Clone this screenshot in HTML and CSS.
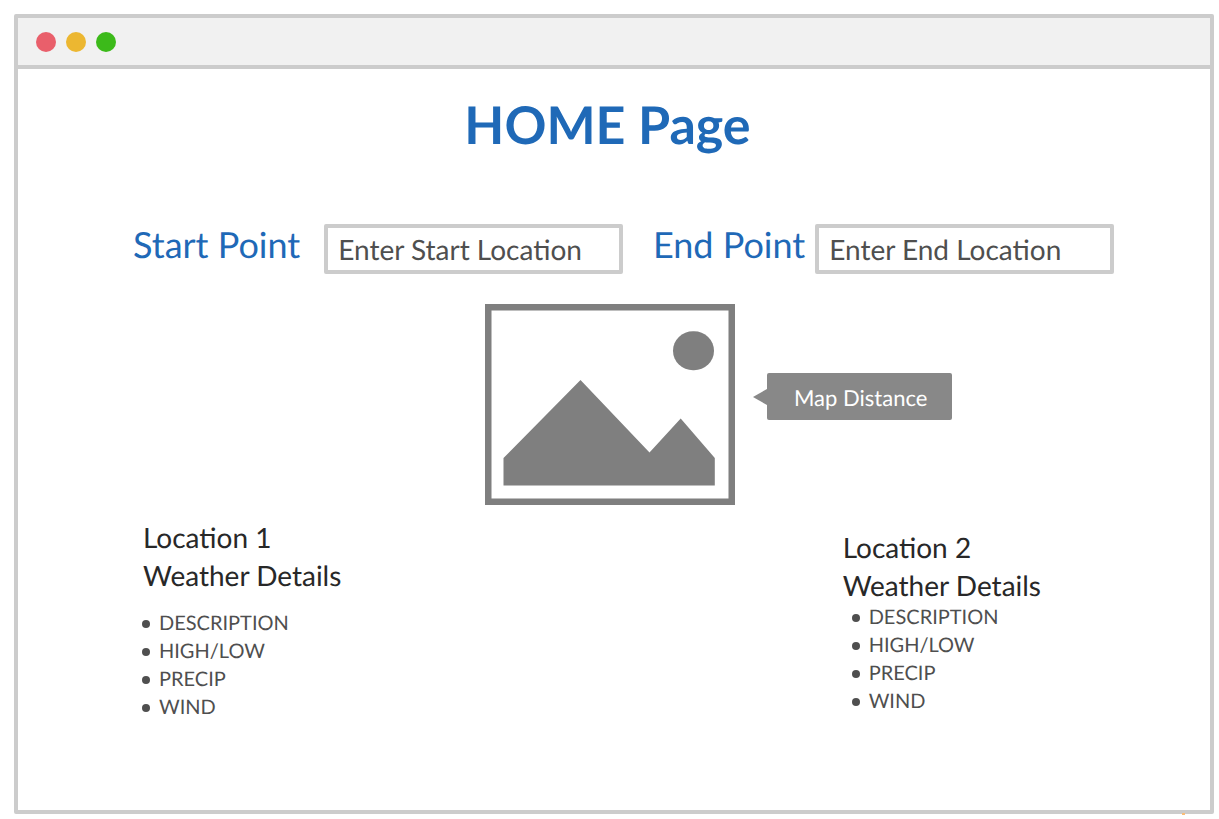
FILE: index.html
```html
<!DOCTYPE html>
<html lang="en">
<head>
<meta charset="utf-8">
<meta name="viewport" content="width=device-width, initial-scale=1">
<title>HOME Page</title>
<link rel="stylesheet" href="styles.css">
</head>
<body>
<div class="window">
  <header class="titlebar">
    <span class="dot dot-red"></span>
    <span class="dot dot-yellow"></span>
    <span class="dot dot-green"></span>
  </header>
  <main>
    <h1 class="title">HOME Page</h1>
    <form class="route">
      <label class="route-label" for="start">Start Point</label>
      <input class="route-input" id="start" type="text" placeholder="Enter Start Location">
      <label class="route-label route-label-end" for="end">End Point</label>
      <input class="route-input" id="end" type="text" placeholder="Enter End Location">
    </form>
    <section class="map">
      <svg class="map-image" width="250" height="201" viewBox="0 0 250 201" role="img" aria-label="Map">
        <path fill="#7f7f7f" fill-rule="evenodd" d="M0 0H250V201H0ZM6.500 6.500V194.500H243.500V6.500Z"/>
        <path fill="#7f7f7f" d="M18.500 154L95.500 76L164.500 148.500L195.700 114.500L229.800 154V181.500H18.500Z"/>
        <rect x="188" y="27.300" width="41" height="39" rx="20" ry="19.500" fill="#7f7f7f"/>
      </svg>
      <div class="callout">Map Distance</div>
    </section>
    <div class="weather">
      <section>
        <h2 class="weather-title">Location 1<br>Weather Details</h2>
        <ul class="weather-list">
          <li>DESCRIPTION</li>
          <li>HIGH/LOW</li>
          <li>PRECIP</li>
          <li>WIND</li>
        </ul>
      </section>
      <section class="weather-second">
        <h2 class="weather-title">Location 2<br>Weather Details</h2>
        <ul class="weather-list">
          <li>DESCRIPTION</li>
          <li>HIGH/LOW</li>
          <li>PRECIP</li>
          <li>WIND</li>
        </ul>
      </section>
    </div>
  </main>
  <span class="speck"></span>
</div>
</body>
</html>
```

FILE: styles.css
```css
* {
  box-sizing: border-box;
}

body {
  margin: 0;
  padding: 14px 5px 5px 14px;
  background: #fff;
  font-family: Lato, "Liberation Sans", sans-serif;
  text-rendering: geometricPrecision;
}

.window {
  position: relative;
  min-height: calc(100vh - 19px);
  padding-bottom: 20px;
  border: 4px solid #ccc;
  border-radius: 2px;
}

.titlebar {
  display: flex;
  align-items: center;
  gap: 10px;
  height: 51px;
  padding: 0 18px;
  background: #f1f1f1;
  border-bottom: 4px solid #ccc;
}

.dot {
  width: 20px;
  height: 20px;
  border-radius: 50%;
}

.dot-red { background: #e95f6b; }
.dot-yellow { background: #ecb731; }
.dot-green { background: #3cba1a; }

.title {
  margin: 0;
  padding: 24px 13px 0 0;
  color: #1f69b7;
  font-size: 52px;
  line-height: 64px;
  font-weight: 700;
  text-align: center;
}

.route {
  display: flex;
  margin-top: 67px;
  padding: 0 96px 0 115px;
}

.route-label {
  flex: none;
  margin-right: 24px;
  color: #1f69b7;
  font-size: 36px;
  line-height: 40px;
}

.route-label-end {
  margin: 0 10px 0 30px;
}

.route-input {
  flex: 1;
  min-width: 0;
  height: 50px;
  padding: 0 10px;
  border: 4px solid #ccc;
  border-radius: 2px;
  background: #fff;
  color: #4f4f4f;
  font: 28px Lato, "Liberation Sans", sans-serif;
  text-rendering: inherit;
}

.route-input::placeholder {
  color: #4f4f4f;
  opacity: 1;
}

.map {
  display: grid;
  grid-template-columns: 1fr 250px 1fr;
  align-items: center;
  margin-top: 30px;
  padding-right: 8px;
}

.map-image {
  grid-column: 2;
}

.callout {
  position: relative;
  justify-self: start;
  margin: 0 0 16px 32px;
  padding: 3px 25px 0 27px;
  border-radius: 2px;
  background: #888;
  color: #fff;
  font-size: 22px;
  line-height: 44px;
}

.callout::before {
  content: "";
  position: absolute;
  top: 16px;
  right: 100%;
  border: solid transparent;
  border-width: 8px 14px 8px 0;
  border-right-color: #888;
}

.weather {
  display: flex;
  justify-content: space-between;
  margin-top: 13px;
  padding: 0 169px 0 124px;
}

.weather-title {
  margin: 0 0 15px;
  padding-left: 1px;
  color: #282828;
  font-size: 28px;
  line-height: 38px;
  font-weight: 400;
}

.weather-list {
  margin: 0;
  padding: 0;
  list-style: none;
  color: #4f4f4f;
  font-size: 20px;
  line-height: 28px;
}

.weather-list li {
  display: flex;
  align-items: center;
  gap: 9px;
}

.weather-list li::before {
  content: "";
  width: 8px;
  height: 8px;
  margin-top: 2px;
  border-radius: 50%;
  background: #4f4f4f;
}

.weather-second {
  padding-top: 10px;
}

.weather-second .weather-title {
  margin-bottom: -1px;
}

.weather-second .weather-list {
  padding-left: 10px;
}

.speck {
  position: absolute;
  right: 25px;
  bottom: -5px;
  width: 3px;
  height: 2px;
  background: #f9bd78;
}
```
